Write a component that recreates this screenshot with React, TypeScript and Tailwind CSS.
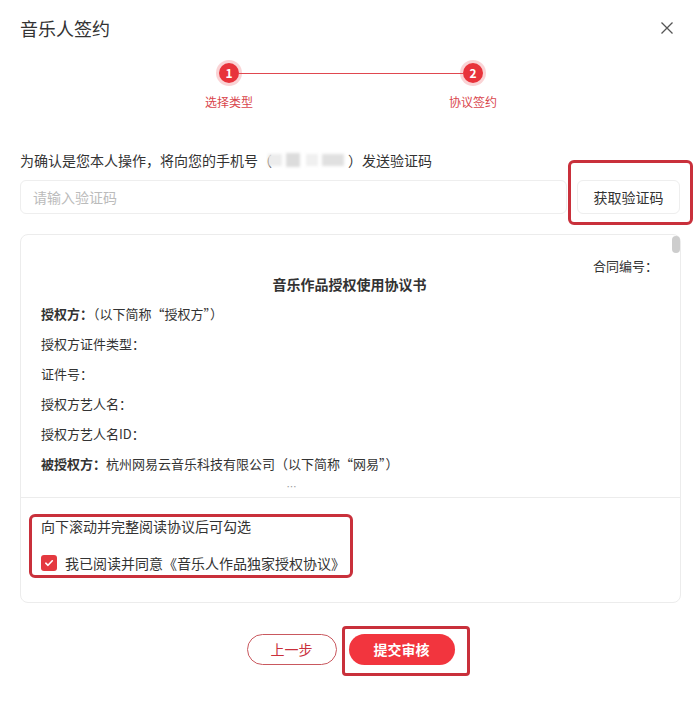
import React from 'react';

const font = { fontFamily: '"Noto Sans CJK SC", "Noto Sans", sans-serif' };

const rows: { label: string; value?: string; bold?: boolean }[] = [
  { label: '授权方：', value: '（以下简称“授权方”）', bold: true },
  { label: '授权方证件类型：' },
  { label: '证件号：' },
  { label: '授权方艺人名：' },
  { label: '授权方艺人名ID：' },
  { label: '被授权方：', value: '杭州网易云音乐科技有限公司（以下简称“网易”）', bold: true },
];

const Step: React.FC<{ n: number; label: string }> = ({ n, label }) => (
  <div className="relative z-10 flex w-[60px] flex-col items-center">
    <div className="flex h-5 w-5 items-center justify-center rounded-full bg-[#e8333b] text-[12px] font-bold leading-none text-white shadow-[0_0_0_3px_rgba(236,80,88,0.25)]">
      {n}
    </div>
    <div className="mt-[11px] whitespace-nowrap text-[12px] leading-4 text-[#d9454c]">{label}</div>
  </div>
);

export default function App() {
  return (
    <div className="relative h-[706px] w-[697px] overflow-hidden bg-white text-[#333]" style={font}>
      {/* header */}
      <div className="flex items-center justify-between pl-5 pr-[23px] pt-4">
        <h1 className="text-[18px] leading-6 font-normal text-[#333]">音乐人签约</h1>
        <svg width="14" height="14" viewBox="0 0 14 14" className="text-[#555]">
          <path d="M1.5 1.5 L12.5 12.5 M12.5 1.5 L1.5 12.5" stroke="currentColor" strokeWidth="1.3" fill="none" />
        </svg>
      </div>

      {/* steps */}
      <div className="ml-[199px] mt-[23px] flex w-[304px] items-start">
        <Step n={1} label="选择类型" />
        <div className="-mx-5 mt-[10px] h-px flex-1 bg-[#e0474f]" />
        <Step n={2} label="协议签约" />
      </div>

      {/* phone verification */}
      <p className="ml-5 mt-10 flex items-center text-[14px] leading-5 text-[#333]">
        <span>为确认是您本人操作，将向您的手机号（</span>
        <span className="relative mx-[-4px] flex h-4 w-[84px] items-center blur-[1.5px]">
          <span className="h-3 w-[14px] bg-[#ececec]" />
          <span className="ml-[4px] h-[14px] w-[14px] bg-[#dcdcdc]" />
          <span className="ml-[6px] h-3 w-[12px] bg-[#f0f0f0]" />
          <span className="ml-[4px] h-3 w-[22px] bg-[#e0e0e0]" />
        </span>
        <span>）发送验证码</span>
      </p>

      <div className="ml-5 mt-[10px] flex w-[661px] gap-[10px]">
        <div className="flex h-[34px] w-[547px] items-center rounded-md border border-[#eeeeee] px-3 text-[14px] text-[#bbbbbb]">
          请输入验证码
        </div>
        <button className="h-[34px] w-[103px] rounded-md border border-[#eeeeee] text-[14px] text-[#333]">
          获取验证码
        </button>
      </div>

      {/* annotation around the code button */}
      <div className="absolute left-[568px] top-[160px] h-[65px] w-[125px] rounded-md border-[3px] border-[#c9303b]" />

      {/* agreement */}
      <div className="ml-5 mt-5 h-[369px] w-[661px] rounded-lg border border-[#ececec]">
        <div className="relative h-[263px] overflow-hidden border-b border-[#ececec] pl-5 pr-[22px] pt-[22px]">
          <div className="absolute right-0 top-[1px] h-[17px] w-[8px] rounded-sm bg-[#cdcdcd]" />
          <div className="text-right text-[13px] leading-[18px]">合同编号：</div>
          <div className="text-center text-[14px] font-bold leading-[18px]">音乐作品授权使用协议书</div>
          <div className="mt-[6px]">
            {rows.map((r) => (
              <div key={r.label} className="text-[13px] leading-[30px]">
                <span className={r.bold ? 'font-bold' : ''}>{r.label}</span>
                {r.value && <span>{r.value}</span>}
              </div>
            ))}
          </div>
          <div className="pr-[116px] text-center text-[10px] leading-4 text-[#999]">…</div>
        </div>

        <div className="ml-2 mt-4 h-[64px] w-[324px] rounded-md border-[3px] border-[#c9303b] pl-[9px]">
          <div className="text-[14px] leading-[18px]">向下滚动并完整阅读协议后可勾选</div>
          <label className="mt-[19px] flex items-center gap-[8px] text-[14px] leading-[18px]">
            <span className="flex h-4 w-4 items-center justify-center rounded-[3px] bg-[#e4393f]">
              <svg width="10" height="10" viewBox="0 0 10 10">
                <path d="M1.8 5.2 L4 7.3 L8.3 2.8" stroke="white" strokeWidth="1.6" fill="none" strokeLinecap="round" strokeLinejoin="round" />
              </svg>
            </span>
            我已阅读并同意《音乐人作品独家授权协议》
          </label>
        </div>
      </div>

      {/* footer buttons */}
      <div className="mt-[31px] flex justify-center gap-3 pl-[4px]">
        <button className="h-[31px] w-[90px] rounded-full border border-[#c9585e] text-[14px] text-[#c9303b]">
          上一步
        </button>
        <button className="h-[31px] w-[106px] rounded-full bg-[#f2353e] text-[14px] font-bold text-white">
          提交审核
        </button>
      </div>

      {/* annotation around submit */}
      <div className="absolute left-[342px] top-[626px] h-[50px] w-[128px] rounded-[4px] border-[3px] border-[#c9303b]" />
    </div>
  );
}
